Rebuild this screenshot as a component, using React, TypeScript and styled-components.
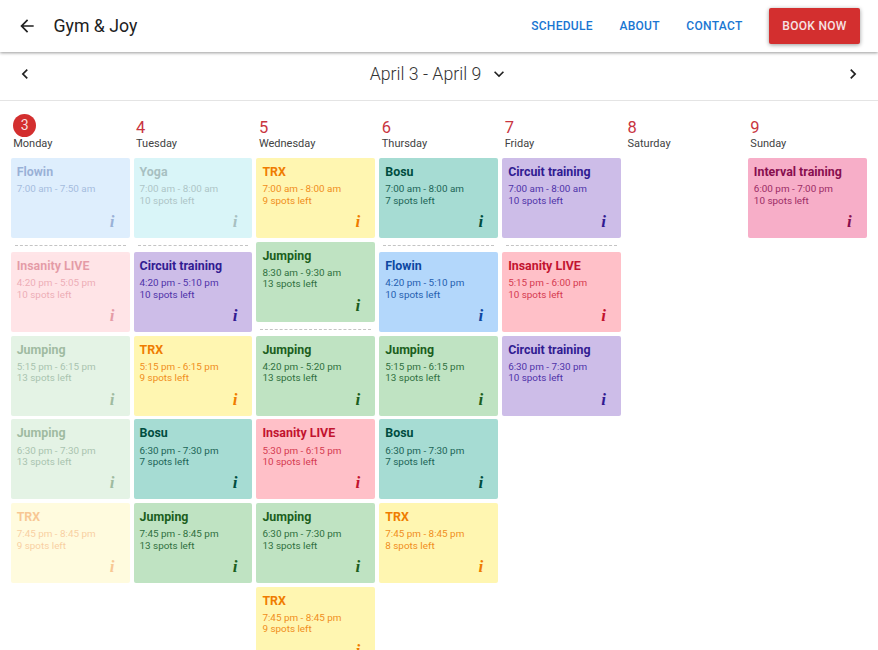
import React from 'react'
import styled, { createGlobalStyle } from 'styled-components'

type Tone = 'blue' | 'cyan' | 'yellow' | 'teal' | 'purple' | 'green' | 'red' | 'pink'

interface Session {
  name: string
  time: string
  spots?: string
  tone: Tone
  // already over, drawn faded
  past?: boolean
  // dashed line under this card
  divider?: boolean
}

interface Day {
  date: number
  label: string
  today?: boolean
  sessions: Session[]
}

const tones: Record<Tone, { bg: string, title: string, text: string }> = {
  blue: { bg: '#b3d7fb', title: '#0d47a1', text: '#2560b0' },
  cyan: { bg: '#a6e8ef', title: '#2f6a6e', text: '#3c7478' },
  yellow: { bg: '#fff6b1', title: '#ef7c00', text: '#f08e1c' },
  teal: { bg: '#a6dcd3', title: '#004d40', text: '#1c6456' },
  purple: { bg: '#cdbde8', title: '#311b92', text: '#4f33a8' },
  green: { bg: '#bfe3c2', title: '#1b5e20', text: '#2f7040' },
  red: { bg: '#ffc0c8', title: '#c2132f', text: '#d53a50' },
  pink: { bg: '#f7aec8', title: '#880e4f', text: '#9c2c66' },
}

const days: Day[] = [
  {
    date: 3,
    label: 'Monday',
    today: true,
    sessions: [
      { name: 'Flowin', time: '7:00 am - 7:50 am', tone: 'blue', past: true, divider: true },
      { name: 'Insanity LIVE', time: '4:20 pm - 5:05 pm', spots: '10 spots left', tone: 'red', past: true },
      { name: 'Jumping', time: '5:15 pm - 6:15 pm', spots: '13 spots left', tone: 'green', past: true },
      { name: 'Jumping', time: '6:30 pm - 7:30 pm', spots: '13 spots left', tone: 'green', past: true },
      { name: 'TRX', time: '7:45 pm - 8:45 pm', spots: '9 spots left', tone: 'yellow', past: true },
    ],
  },
  {
    date: 4,
    label: 'Tuesday',
    sessions: [
      { name: 'Yoga', time: '7:00 am - 8:00 am', spots: '10 spots left', tone: 'cyan', past: true, divider: true },
      { name: 'Circuit training', time: '4:20 pm - 5:10 pm', spots: '10 spots left', tone: 'purple' },
      { name: 'TRX', time: '5:15 pm - 6:15 pm', spots: '9 spots left', tone: 'yellow' },
      { name: 'Bosu', time: '6:30 pm - 7:30 pm', spots: '7 spots left', tone: 'teal' },
      { name: 'Jumping', time: '7:45 pm - 8:45 pm', spots: '13 spots left', tone: 'green' },
    ],
  },
  {
    date: 5,
    label: 'Wednesday',
    sessions: [
      { name: 'TRX', time: '7:00 am - 8:00 am', spots: '9 spots left', tone: 'yellow' },
      { name: 'Jumping', time: '8:30 am - 9:30 am', spots: '13 spots left', tone: 'green', divider: true },
      { name: 'Jumping', time: '4:20 pm - 5:20 pm', spots: '13 spots left', tone: 'green' },
      { name: 'Insanity LIVE', time: '5:30 pm - 6:15 pm', spots: '10 spots left', tone: 'red' },
      { name: 'Jumping', time: '6:30 pm - 7:30 pm', spots: '13 spots left', tone: 'green' },
      { name: 'TRX', time: '7:45 pm - 8:45 pm', spots: '9 spots left', tone: 'yellow' },
    ],
  },
  {
    date: 6,
    label: 'Thursday',
    sessions: [
      { name: 'Bosu', time: '7:00 am - 8:00 am', spots: '7 spots left', tone: 'teal', divider: true },
      { name: 'Flowin', time: '4:20 pm - 5:10 pm', spots: '10 spots left', tone: 'blue' },
      { name: 'Jumping', time: '5:15 pm - 6:15 pm', spots: '13 spots left', tone: 'green' },
      { name: 'Bosu', time: '6:30 pm - 7:30 pm', spots: '7 spots left', tone: 'teal' },
      { name: 'TRX', time: '7:45 pm - 8:45 pm', spots: '8 spots left', tone: 'yellow' },
    ],
  },
  {
    date: 7,
    label: 'Friday',
    sessions: [
      { name: 'Circuit training', time: '7:00 am - 8:00 am', spots: '10 spots left', tone: 'purple', divider: true },
      { name: 'Insanity LIVE', time: '5:15 pm - 6:00 pm', spots: '10 spots left', tone: 'red' },
      { name: 'Circuit training', time: '6:30 pm - 7:30 pm', spots: '10 spots left', tone: 'purple' },
    ],
  },
  { date: 8, label: 'Saturday', sessions: [] },
  {
    date: 9,
    label: 'Sunday',
    sessions: [
      { name: 'Interval training', time: '6:00 pm - 7:00 pm', spots: '10 spots left', tone: 'pink' },
    ],
  },
]

const GlobalStyle = createGlobalStyle`
  html, body {
    margin: 0;
    height: 650px;
    overflow: hidden;
    background: #fff;
    font-family: Roboto, "Liberation Sans", sans-serif;
  }
`

const Page = styled.div`
  height: 650px;
  overflow: hidden;
`

const AppBar = styled.header`
  position: relative;
  display: flex;
  align-items: center;
  height: 52px;
  padding: 0 18px 0 17px;
  box-sizing: border-box;
  background: #fff;
  box-shadow: 0 1px 3px rgba(0, 0, 0, 0.4);
`

const Title = styled.div`
  margin-left: 16.5px;
  flex: 1;
  font-size: 17.7px;
  color: #212121;
`

const NavLink = styled.a`
  margin-right: 26.5px;
  font-size: 12px;
  font-weight: 500;
  letter-spacing: 0.3px;
  color: #1976d2;
`

const BookButton = styled.button`
  width: 91px;
  height: 36px;
  padding: 0;
  border: none;
  border-radius: 2px;
  background: #d32f2f;
  color: #f6e3e3;
  font-family: inherit;
  font-size: 12px;
  font-weight: 500;
  letter-spacing: 0.3px;
  box-shadow: 0 1px 4px rgba(0, 0, 0, 0.4);
`

const DateBar = styled.div`
  display: flex;
  align-items: center;
  justify-content: space-between;
  height: 49px;
  padding: 0 15px 5px;
  box-sizing: border-box;
  border-bottom: 1px solid #e4e4e4;
`

const DateLabel = styled.div`
  display: flex;
  align-items: center;
  gap: 8px;
  margin-left: 1px;
  font-size: 17.7px;
  font-weight: 300;
  color: #333;
`

const Icon = styled.svg`
  display: block;
  width: 20px;
  height: 20px;
  fill: #212121;
  flex: none;
`

const Week = styled.main`
  display: grid;
  grid-template-columns: repeat(7, 1fr);
  column-gap: 4px;
  padding: 12px 11.3px 0 10.7px;
`

const Column = styled.section`
  display: flex;
  flex-direction: column;
  min-width: 0;
`

const DayHead = styled.div`
  height: 45px;
  padding-left: 2.5px;
`

const DayNumber = styled.div<{ $today?: boolean }>`
  display: flex;
  align-items: ${props => props.$today ? 'center' : 'flex-end'};
  justify-content: ${props => props.$today ? 'center' : 'flex-start'};
  width: 23px;
  height: ${props => props.$today ? '23px' : '24px'};
  font-size: ${props => props.$today ? '14px' : '16.5px'};
  line-height: 19px;
  color: ${props => props.$today ? '#f7dede' : '#c9353f'};
  ${props => props.$today && `
    margin-top: 1px;
    background: #d32f2f;
    border-radius: 50%;
  `}
`

const DayName = styled.div`
  font-size: 11px;
  line-height: 13px;
  color: #424242;
`

const Card = styled.article<{ $tone: Tone, $past?: boolean }>`
  position: relative;
  flex: none;
  height: 80px;
  margin-bottom: 3.7px;
  padding: 6px 6px 0;
  box-sizing: border-box;
  border-radius: 2px;
  background: ${props => tones[props.$tone].bg};
  opacity: ${props => props.$past ? 0.42 : 1};
`

const CardTitle = styled.div<{ $tone: Tone }>`
  font-size: 12.4px;
  font-weight: 700;
  line-height: 15px;
  white-space: nowrap;
  color: ${props => tones[props.$tone].title};
`

const CardText = styled.div<{ $tone: Tone }>`
  font-size: 9.9px;
  line-height: 11.3px;
  white-space: nowrap;
  color: ${props => tones[props.$tone].text};
`

const CardTime = styled(CardText)`
  margin-top: 4.4px;
`

const InfoMark = styled.span<{ $tone: Tone }>`
  position: absolute;
  right: 15px;
  bottom: 8px;
  font-family: "Liberation Serif", serif;
  font-style: italic;
  font-weight: 700;
  font-size: 17px;
  line-height: 17px;
  color: ${props => tones[props.$tone].title};
`

const Divider = styled.div`
  flex: none;
  height: 0;
  margin: 3.3px 4px 6px;
  border-top: 1px dashed #c4c4c4;
`

const App: React.FC = () => (
  <Page>
    <GlobalStyle />
    <AppBar>
      <Icon viewBox="0 0 24 24"><path d="M20 11H7.83l5.59-5.59L12 4l-8 8 8 8 1.41-1.41L7.83 13H20v-2z" /></Icon>
      <Title>Gym &amp; Joy</Title>
      <NavLink>SCHEDULE</NavLink>
      <NavLink>ABOUT</NavLink>
      <NavLink>CONTACT</NavLink>
      <BookButton>BOOK NOW</BookButton>
    </AppBar>
    <DateBar>
      <Icon viewBox="0 0 24 24"><path d="M15.41 7.41L14 6l-6 6 6 6 1.41-1.41L10.83 12z" /></Icon>
      <DateLabel>
        April 3 - April 9
        <Icon viewBox="0 0 24 24"><path d="M16.59 8.59L12 13.17 7.41 8.59 6 10l6 6 6-6z" /></Icon>
      </DateLabel>
      <Icon viewBox="0 0 24 24"><path d="M10 6L8.59 7.41 13.17 12l-4.58 4.59L10 18l6-6z" /></Icon>
    </DateBar>
    <Week>
      {days.map(day => (
        <Column key={day.date}>
          <DayHead>
            <DayNumber $today={day.today}>{day.date}</DayNumber>
            <DayName>{day.label}</DayName>
          </DayHead>
          {day.sessions.map(session => (
            <React.Fragment key={session.time}>
              <Card $tone={session.tone} $past={session.past}>
                <CardTitle $tone={session.tone}>{session.name}</CardTitle>
                <CardTime $tone={session.tone}>{session.time}</CardTime>
                {session.spots && <CardText $tone={session.tone}>{session.spots}</CardText>}
                <InfoMark $tone={session.tone}>i</InfoMark>
              </Card>
              {session.divider && <Divider />}
            </React.Fragment>
          ))}
        </Column>
      ))}
    </Week>
  </Page>
)

export default App
